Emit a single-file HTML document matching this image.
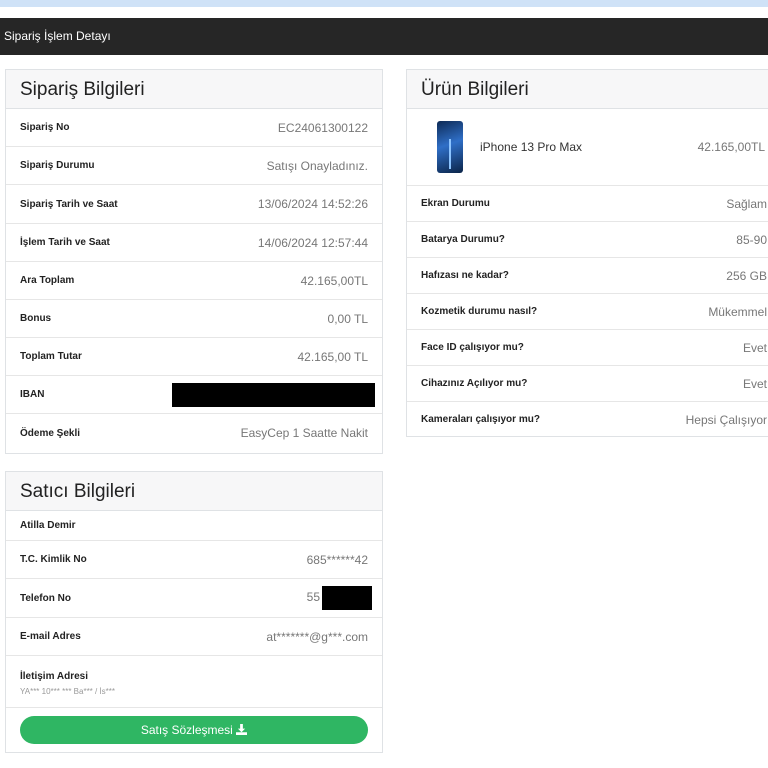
<!DOCTYPE html>
<html><head><meta charset="utf-8"><style>
*{box-sizing:border-box;margin:0;padding:0}
body{width:768px;height:768px;overflow:hidden;background:#fff;font-family:"Liberation Sans","DejaVu Sans",sans-serif;position:relative}
.top{position:absolute;left:0;top:0;width:768px;height:7px;background:#cfe2f7}
.bar{position:absolute;left:0;top:18px;width:768px;height:37px;background:#262626;color:#fff;font-size:12px;line-height:37px;padding-left:4px}
.card{position:absolute;border:1px solid #dfe2e5;background:#fff}
.hd{background:#f7f7f8;border-bottom:1px solid #dfe2e5;height:39px;font-size:19px;line-height:39px;padding-left:14px;color:#222}
.row{border-bottom:1px solid #e6e6e6;display:flex;justify-content:space-between;align-items:center;padding:0 14px;font-size:12px}
.row:last-child{border-bottom:none}
.row b{font-size:10px;color:#222}
.row span{color:#777;font-size:12px}
</style></head><body>
<div class="top"></div>
<div class="bar">Sipariş İşlem Detayı</div>

<div class="card" style="left:5px;top:69px;width:378px;height:385px">
<div class="hd">Sipariş Bilgileri</div>
<div class="row" style="height:38px"><b>Sipariş No</b><span>EC24061300122</span></div>
<div class="row" style="height:38px"><b>Sipariş Durumu</b><span>Satışı Onayladınız.</span></div>
<div class="row" style="height:39px"><b>Sipariş Tarih ve Saat</b><span>13/06/2024 14:52:26</span></div>
<div class="row" style="height:38px"><b>İşlem Tarih ve Saat</b><span>14/06/2024 12:57:44</span></div>
<div class="row" style="height:38px"><b>Ara Toplam</b><span>42.165,00TL</span></div>
<div class="row" style="height:38px"><b>Bonus</b><span>0,00 TL</span></div>
<div class="row" style="height:38px"><b>Toplam Tutar</b><span>42.165,00 TL</span></div>
<div class="row" style="height:38px"><b>IBAN</b><span style="display:inline-block;width:203px;height:24px;background:#000;margin-right:-7px"></span></div>
<div class="row" style="height:38px"><b>Ödeme Şekli</b><span>EasyCep 1 Saatte Nakit</span></div>
</div>

<div class="card" style="left:5px;top:471px;width:378px;height:282px">
<div class="hd">Satıcı Bilgileri</div>
<div class="row" style="height:30px"><b>Atilla Demir</b></div>
<div class="row" style="height:38px"><b>T.C. Kimlik No</b><span>685******42</span></div>
<div class="row" style="height:39px"><b>Telefon No</b><span style="margin-right:-4px">55<span style="display:inline-block;width:50px;height:24px;background:#000;vertical-align:middle;margin-left:2px"></span></span></div>
<div class="row" style="height:38px"><b>E-mail Adres</b><span>at*******@g***.com</span></div>
<div class="row" style="height:52px;display:block;padding-top:12px"><b>İletişim Adresi</b><div style="font-size:8px;color:#999;margin-top:5px">YA*** 10*** *** Ba*** / İs***</div></div>
<div style="margin:8px 14px 0;height:28px;border-radius:14px;background:#2fb663;color:#fff;font-size:12px;line-height:28px;text-align:center">Satış Sözleşmesi <svg width="11" height="11" viewBox="0 0 12 12" style="vertical-align:-1px"><path d="M4.5 0h3v5h2.5L6 9 2 5h2.5z" fill="#fff"/><rect x="0" y="9" width="12" height="3" fill="#fff"/></svg></div>
</div>

<div class="card" style="left:406px;top:69px;width:376px;height:368px">
<div class="hd">Ürün Bilgileri</div>
<div class="row" style="height:77px;padding-left:30px"><div style="display:flex;align-items:center"><div style="width:26px;height:52px;border-radius:3px;background:linear-gradient(160deg,#0d2a55,#2f6fc7 45%,#0b2448);position:relative"><div style="position:absolute;left:12px;top:18px;width:2px;height:30px;background:#8cc4ff"></div></div><span style="color:#333;font-size:12px;margin-left:17px">iPhone 13 Pro Max</span></div><span style="margin-right:2px">42.165,00TL</span></div>
<div class="row" style="height:36px"><b>Ekran Durumu</b><span>Sağlam</span></div>
<div class="row" style="height:36px"><b>Batarya Durumu?</b><span>85-90</span></div>
<div class="row" style="height:36px"><b>Hafızası ne kadar?</b><span>256 GB</span></div>
<div class="row" style="height:36px"><b>Kozmetik durumu nasıl?</b><span>Mükemmel</span></div>
<div class="row" style="height:36px"><b>Face ID çalışıyor mu?</b><span>Evet</span></div>
<div class="row" style="height:36px"><b>Cihazınız Açılıyor mu?</b><span>Evet</span></div>
<div class="row" style="height:35px"><b>Kameraları çalışıyor mu?</b><span>Hepsi Çalışıyor</span></div>
</div>
</body></html>
